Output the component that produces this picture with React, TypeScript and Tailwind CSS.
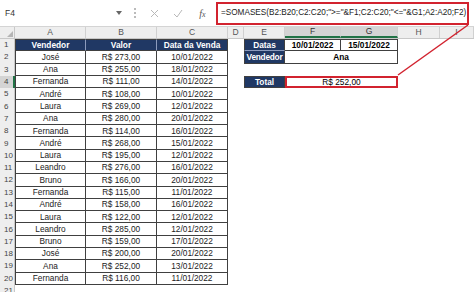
import React from 'react'

const FONT = { fontFamily: '"Liberation Sans", Arial, sans-serif' }

const rows: [string, string, string][] = [
  ['José', 'R$ 273,00', '10/01/2022'],
  ['Ana', 'R$ 255,00', '18/01/2022'],
  ['Fernanda', 'R$ 111,00', '14/01/2022'],
  ['André', 'R$ 108,00', '10/01/2022'],
  ['Laura', 'R$ 269,00', '12/01/2022'],
  ['Ana', 'R$ 280,00', '20/01/2022'],
  ['Fernanda', 'R$ 114,00', '16/01/2022'],
  ['André', 'R$ 268,00', '15/01/2022'],
  ['Laura', 'R$ 195,00', '12/01/2022'],
  ['Leandro', 'R$ 276,00', '16/01/2022'],
  ['Bruno', 'R$ 166,00', '20/01/2022'],
  ['Fernanda', 'R$ 115,00', '11/01/2022'],
  ['André', 'R$ 158,00', '16/01/2022'],
  ['Laura', 'R$ 122,00', '12/01/2022'],
  ['Leandro', 'R$ 285,00', '12/01/2022'],
  ['Bruno', 'R$ 159,00', '17/01/2022'],
  ['José', 'R$ 200,00', '20/01/2022'],
  ['Ana', 'R$ 252,00', '13/01/2022'],
  ['Fernanda', 'R$ 116,00', '11/01/2022'],
]

const colHeads = [
  { l: 'A', w: 'w-[71px]' },
  { l: 'B', w: 'w-[71px]' },
  { l: 'C', w: 'w-[71px]' },
  { l: 'D', w: 'w-[16px]' },
  { l: 'E', w: 'w-[41px]' },
  { l: 'F', w: 'w-[56px]', on: true },
  { l: 'G', w: 'w-[57px]', on: true },
  { l: 'H', w: 'w-[42px]' },
  { l: 'I', w: 'flex-1' },
]

function RowNum({ n }: { n: number }) {
  const active = n === 4
  return (
    <div
      className={
        'w-[15px] shrink-0 h-full flex items-center pl-[4px] text-[8px] text-[#444] ' +
        (active ? 'bg-[#d4d4d4] border-r-2 border-[#217346]' : 'bg-[#eeeeee] border-r border-[#c8c8c8]')
      }
    >
      {n}
    </div>
  )
}

function Cell({ w, className = '', children }: { w: string; className?: string; children?: React.ReactNode }) {
  return <div className={w + ' shrink-0 h-full flex items-center justify-center ' + className}>{children}</div>
}

function RightSide({ n }: { n: number }) {
  const navy = 'bg-[#203864] text-white font-bold border-r border-b border-[#404040]'
  const box = 'border-r border-b border-[#404040] font-bold text-black'
  if (n === 1)
    return (
      <>
        <Cell w="w-[16px]" />
        <Cell w="w-[41px]" className={navy + ' border-t border-l border-b-[#8c9bbd]'}>Datas</Cell>
        <Cell w="w-[56px]" className={box + ' border-t'}>10/01/2022</Cell>
        <Cell w="w-[57px]" className={box + ' border-t'}>15/01/2022</Cell>
      </>
    )
  if (n === 2)
    return (
      <>
        <Cell w="w-[16px]" />
        <Cell w="w-[41px]" className={navy + ' border-l tracking-[-0.25px] text-[8.3px]'}>Vendedor</Cell>
        <Cell w="w-[113px]" className={box}>Ana</Cell>
      </>
    )
  if (n === 4)
    return (
      <>
        <Cell w="w-[16px]" />
        <Cell w="w-[41px]" className={navy + ' border-l border-t'}>Total</Cell>
        <Cell w="w-[113px]" className="border-2 border-[#d2232f] text-black">R$ 252,00</Cell>
      </>
    )
  return null
}

export default function App() {
  return (
    <div className="relative w-[474px] h-[292px] overflow-hidden bg-white" style={FONT}>
      {/* formula bar */}
      <div className="h-[27px] flex items-center border-b border-[#d4d4d4] bg-white">
        <div className="w-[128px] h-full flex items-center justify-between pl-[5px] pr-[6px]">
          <span className="text-[8.5px] text-[#333]">F4</span>
          <svg width="6" height="4" viewBox="0 0 6 4">
            <path d="M0 0 L6 0 L3 4 Z" fill="#666" />
          </svg>
        </div>
        <div className="w-[14px] flex flex-col items-center gap-[2px]">
          <span className="w-[2px] h-[2px] bg-[#bbb]" />
          <span className="w-[2px] h-[2px] bg-[#bbb]" />
          <span className="w-[2px] h-[2px] bg-[#bbb]" />
        </div>
        <div className="w-[25px] flex justify-center">
          <svg width="9" height="9" viewBox="0 0 9 9">
            <path d="M1 1 L8 8 M8 1 L1 8" stroke="#b8b8b8" strokeWidth="1" />
          </svg>
        </div>
        <div className="w-[22px] flex justify-center">
          <svg width="10" height="9" viewBox="0 0 10 9">
            <path d="M1 5 L4 8 L9 1" stroke="#b8b8b8" strokeWidth="1" fill="none" />
          </svg>
        </div>
        <div className="w-[27px] flex justify-center">
          <span className="text-[10px] italic text-[#555]" style={{ fontFamily: '"Liberation Serif", serif' }}>
            f<span className="text-[8px]">x</span>
          </span>
        </div>
        <div className="w-[253px] h-[23px] border-2 border-[#d2232f] flex items-center pl-[3px] text-[8.2px] text-[#222] whitespace-nowrap overflow-hidden">
          {'=SOMASES(B2:B20;C2:C20;">="&F1;C2:C20;"<="&G1;A2:A20;F2)'}
        </div>
      </div>

      {/* column headers */}
      <div className="h-[12px] flex bg-[#eeeeee] border-b border-[#c8c8c8]">
        <div className="w-[15px] shrink-0 h-full border-r border-[#c8c8c8] flex items-end justify-end p-[1px]">
          <svg width="6" height="6" viewBox="0 0 6 6">
            <path d="M6 0 L6 6 L0 6 Z" fill="#b5b5b5" />
          </svg>
        </div>
        {colHeads.map((c) => (
          <div
            key={c.l}
            className={
              c.w +
              ' shrink-0 h-full flex items-center justify-center text-[8.5px] border-r border-[#d0d0d0] ' +
              (c.on ? 'bg-[#d4d4d4] text-[#333] border-b-2 border-b-[#217346]' : 'text-[#555]')
            }
          >
            {c.l}
          </div>
        ))}
      </div>

      {/* row 1 */}
      <div className="h-[12.3px] flex text-[8.3px]">
        <RowNum n={1} />
        <Cell w="w-[71px]" className="bg-[#203864] text-white font-bold border-l border-t border-b border-[#404040] border-r border-r-[#8c9bbd]">Vendedor</Cell>
        <Cell w="w-[71px]" className="bg-[#203864] text-white font-bold border-t border-b border-[#404040] border-r border-r-[#8c9bbd]">Valor</Cell>
        <Cell w="w-[71px]" className="bg-[#203864] text-white font-bold border-t border-b border-r border-[#404040]">Data da Venda</Cell>
        <RightSide n={1} />
      </div>

      {rows.map((r, i) => {
        const n = i + 2
        return (
          <div key={n} className="h-[12.3px] flex text-[8.3px] text-[#222]">
            <RowNum n={n} />
            <Cell w="w-[71px]" className="border-l border-r border-b border-[#404040]">{r[0]}</Cell>
            <Cell w="w-[71px]" className="border-r border-b border-[#404040]">{r[1]}</Cell>
            <Cell w="w-[71px]" className="border-r border-b border-[#404040]">{r[2]}</Cell>
            <RightSide n={n} />
          </div>
        )
      })}

      <div className="h-[12.3px] flex text-[8px]">
        <RowNum n={21} />
      </div>

      {/* callout line */}
      <svg className="absolute inset-0 pointer-events-none" width="474" height="292">
        <line x1="468" y1="25" x2="398" y2="75" stroke="#d2232f" strokeWidth="1.5" />
      </svg>
    </div>
  )
}
